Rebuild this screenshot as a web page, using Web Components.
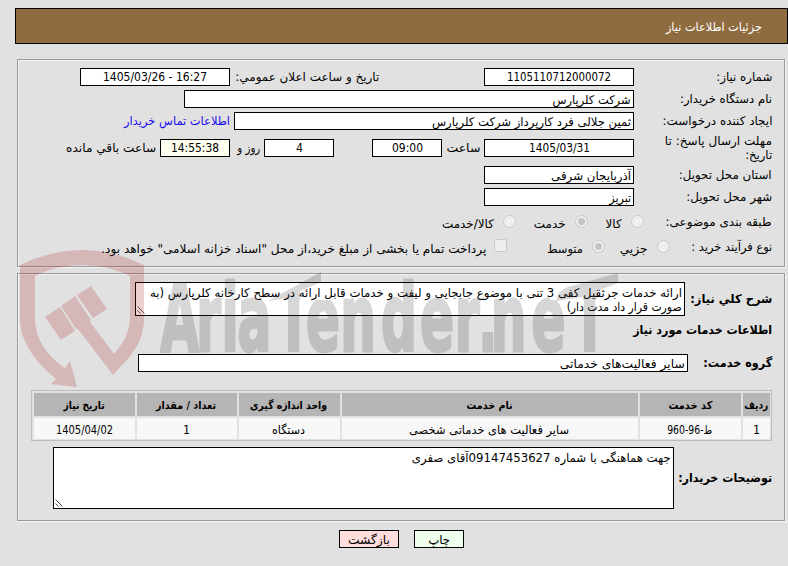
<!DOCTYPE html>
<html lang="fa" dir="rtl">
<head>
<meta charset="utf-8">
<title>جزئیات اطلاعات نیاز</title>
<style>
    html { background: #e1e1e1; }
    body {
        margin: 0;
        height: 566px;
        overflow: hidden;
        background: #e1e1e1;
        color: #000;
        font: 12px/14px "DejaVu Sans Condensed", "DejaVu Sans", sans-serif;
    }
</style>
</head>
<body>
<need-page></need-page>

<script>
const define = (name, html, setup) => {
    const template = document.createElement('template');
    template.innerHTML = html;
    customElements.define(name, class extends HTMLElement {
        constructor() {
            super();
            this.attachShadow({mode: 'open'}).appendChild(template.content.cloneNode(true));
        }
        connectedCallback() {
            if (setup) setup(this, this.shadowRoot);
        }
    });
};

// width, height and leading gap come in as attributes
const applyBox = (el) => {
    if (el.hasAttribute('w')) el.style.width = el.getAttribute('w') + 'px';
    if (el.hasAttribute('h')) el.style.height = el.getAttribute('h') + 'px';
    if (el.hasAttribute('gap')) el.style.marginInlineStart = el.getAttribute('gap') + 'px';
};

// one line of text that is condensed or stretched to a given width
define('fit-text', `
    <style>
    :host { display: inline-block; flex: none; white-space: nowrap; vertical-align: top; }
    :host([bold]) { font-weight: bold; }
    :host([ltr]) { direction: ltr; }
    :host([low]) { padding-top: 3px; }
    :host([link]) { color: #1a0dee; }
    span { display: inline-block; transform-origin: right center; }
    :host([ltr]) span { transform-origin: left center; }
    </style>
    <span><slot></slot></span>
`, (el, root) => {
    applyBox(el);
    const span = root.querySelector('span');
    const natural = span.getBoundingClientRect().width;
    const wanted = Number(el.getAttribute('w'));
    if (natural && wanted) {
        span.style.transform = `scaleX(${wanted / natural})`;
    }
});

define('page-title', `
    <style>
    :host {
        display: flex;
        align-items: center;
        box-sizing: border-box;
        height: 36px;
        margin: 8px 0 15px 15px;
        padding: 1px 25px 0;
        border: 1px solid #000;
        background: #8f6c40;
        color: #fff;
    }
    </style>
    <slot></slot>
`);

define('field-group', `
    <style>
    :host {
        display: flex;
        flex-direction: column;
        box-sizing: border-box;
        margin: 0 3px 6px 17px;
        padding: 8px 12px 0;
        border: 1px solid #9a9a9a;
        box-shadow: inset 1px 1px #f4f4f4, 1px 1px #f4f4f4;
    }
    </style>
    <slot></slot>
`, applyBox);

define('form-row', `
    <style>
    :host { display: flex; flex: none; align-items: center; height: 18px; margin-bottom: 4px; }
    </style>
    <slot></slot>
`, applyBox);

define('row-label', `
    <style>
    :host { display: flex; flex: none; flex-direction: column; align-items: flex-start; }
    </style>
    <slot></slot>
`, applyBox);

define('value-box', `
    <style>
    :host {
        display: flex;
        flex: none;
        align-items: center;
        box-sizing: border-box;
        height: 18px;
        padding: 1px 2px 0;
        border: 1px solid #000;
        background: #fff;
    }
    :host([center]) { justify-content: center; padding-top: 0; }
    :host([live]) { background: #fffff0; }
    </style>
    <slot></slot>
`, applyBox);

define('text-area', `
    <style>
    :host {
        display: flex;
        flex: none;
        flex-direction: column;
        box-sizing: border-box;
        position: relative;
        padding: 3px 2px;
        border: 1px solid #000;
        background: #fff;
    }
    svg { position: absolute; left: 1px; bottom: 1px; }
    </style>
    <slot></slot>
    <svg width="8" height="8" viewBox="0 0 8 8" fill="none" stroke="#555" stroke-width="1">
        <path d="M.5.5l7 7M.5 4.5l3 3"/>
    </svg>
`, applyBox);

define('radio-mark', `
    <style>
    :host {
        display: grid;
        flex: none;
        place-items: center;
        box-sizing: border-box;
        width: 13px;
        height: 13px;
        margin-top: -2px;
        border: 1px solid #c8c8c8;
        border-radius: 50%;
        background: #efefef;
    }
    :host([square]) { border-radius: 2px; margin-top: -3px; }
    i { display: none; width: 7px; height: 7px; border-radius: 50%; background: #c4c4c4; }
    :host([on]) i { display: block; }
    </style>
    <i></i>
`, applyBox);

define('data-grid', `
    <style>
    :host {
        display: grid;
        flex: none;
        grid-template-columns: 27px 101px 296px 101px 100px 101px;
        grid-template-rows: 23px 21px;
        gap: 2px;
        box-sizing: border-box;
        width: 741px;
        height: 51px;
        padding: 2px 1px 1px 1px;
        border: 1px solid #bdbdbd;
        justify-content: center;
    }
    </style>
    <slot></slot>
`);

define('grid-cell', `
    <style>
    :host { display: flex; align-items: center; justify-content: center; background: #f7f7f7; padding-top: 2px; }
    :host([head]) { background: #b5b5b5; font-weight: bold; font-size: 11px; }
    </style>
    <slot></slot>
`);

define('action-button', `
    <style>
    :host {
        display: flex;
        align-items: center;
        justify-content: center;
        box-sizing: border-box;
        height: 18px;
        padding-top: 2px;
        border: 1px solid #000;
        background: #eeffee;
    }
    :host([back]) { background: #ffdddd; }
    </style>
    <slot></slot>
`, applyBox);

// translucent site mark that lies over the form
define('site-mark', `
    <style>
    :host { position: absolute; inset: 0; pointer-events: none; direction: ltr; }
    svg { display: block; opacity: .2; }
    text {
        font: bold 93px "DejaVu Sans Condensed", "DejaVu Sans", sans-serif;
        fill: #3c3c3c;
        stroke: #3c3c3c;
        stroke-width: 3px;
        stroke-linejoin: round;
    }
    </style>
    <svg width="788" height="566" viewBox="0 0 788 566">
        <defs>
            <clipPath id="bars">
                <path d="M150 270H272V360H150zM272 300H590V360H272zM340 270H550V300H340zM580 300H640V360H580z"/>
            </clipPath>
        </defs>
        <g fill="#aa141c">
            <path d="M20 265Q51 250 82 250T144 265V318C144 343 131 356 113 375L78 329 76 329 61 306 75 296 91 320 90 322 114 354C123 343 130 333 130 316V276Q107 265 82 265T35 276V318C35 341 49 357 65 368L70 361 77 387 51 384 56 379C35 361 20 342 20 318Z"/>
            <path d="M45 317L60 307 75 331 61 340ZM77 295L91 286 107 309 93 318Z"/>
        </g>
        <g clip-path="url(#bars)">
            <text transform="translate(0 351) scale(.6 1)"
                x="267 327 369 396 461 510 567 635 700 758 797 818 886 954">AriaTender.neT</text>
        </g>
        <path fill="#3c3c3c" d="M268 301L321 272V282L300 291V300H288V298ZM556 301Q557 291 568 287L618 273V283L597 291V300H583V297Z"/>
    </svg>
`);

define('need-page', `
    <style>
    :host { display: flow-root; position: relative; width: 788px; height: 566px; }
    footer { display: flex; gap: 15px; margin-top: 9px; padding-right: 324px; }
    </style>

    <page-title><fit-text w="96">جزئیات اطلاعات نیاز</fit-text></page-title>

    <field-group h="208">
        <form-row>
            <row-label w="138"><fit-text w="56">شماره نیاز:</fit-text></row-label>
            <value-box w="150" center><fit-text w="104" ltr>1105110712000072</fit-text></value-box>
            <fit-text w="144" gap="105">تاریخ و ساعت اعلان عمومي:</fit-text>
            <value-box w="150" gap="5" center><fit-text w="104" ltr>1405/03/26 - 16:27</fit-text></value-box>
        </form-row>
        <form-row>
            <row-label w="138"><fit-text w="92">نام دستگاه خریدار:</fit-text></row-label>
            <value-box w="450"><fit-text w="78">شرکت کلرپارس</fit-text></value-box>
        </form-row>
        <form-row>
            <row-label w="138"><fit-text w="110">ایجاد کننده درخواست:</fit-text></row-label>
            <value-box w="400"><fit-text w="199">ثمین جلالی فرد کارپرداز شرکت کلرپارس</fit-text></value-box>
            <fit-text w="106" gap="4" link>اطلاعات تماس خریدار</fit-text>
        </form-row>
        <form-row h="28">
            <row-label w="138">
                <fit-text w="107">مهلت ارسال پاسخ: تا</fit-text>
                <fit-text w="27">تاریخ:</fit-text>
            </row-label>
            <value-box w="150" center><fit-text w="61" ltr>1405/03/31</fit-text></value-box>
            <fit-text w="34" gap="4">ساعت</fit-text>
            <value-box w="70" gap="4" center><fit-text w="31" ltr>09:00</fit-text></value-box>
            <value-box w="70" gap="38" center><fit-text w="7" ltr>4</fit-text></value-box>
            <fit-text w="23" gap="4">روز و</fit-text>
            <value-box w="70" gap="7" center live><fit-text w="48" ltr>14:55:38</fit-text></value-box>
            <fit-text w="90" gap="4">ساعت باقي مانده</fit-text>
        </form-row>
        <form-row>
            <row-label w="138"><fit-text w="93">استان محل تحویل:</fit-text></row-label>
            <value-box w="150"><fit-text w="80">آذربایجان شرقی</fit-text></value-box>
        </form-row>
        <form-row>
            <row-label w="138"><fit-text w="86">شهر محل تحویل:</fit-text></row-label>
            <value-box w="150"><fit-text w="22">تبریز</fit-text></value-box>
        </form-row>
        <form-row h="24" style="margin-bottom: 1px">
            <row-label w="128"><fit-text w="106">طبقه بندی موضوعی:</fit-text></row-label>
            <radio-mark></radio-mark><fit-text w="16" gap="9" low>کالا</fit-text>
            <radio-mark gap="18" on></radio-mark><fit-text w="32" gap="9" low>خدمت</fit-text>
            <radio-mark gap="18"></radio-mark><fit-text w="52" gap="9" low>کالا/خدمت</fit-text>
        </form-row>
        <form-row h="24">
            <row-label w="102"><fit-text w="81">نوع فرآیند خرید :</fit-text></row-label>
            <radio-mark></radio-mark><fit-text w="28" gap="9" low>جزیي</fit-text>
            <radio-mark gap="15" on></radio-mark><fit-text w="36" gap="9" low>متوسط</fit-text>
            <radio-mark gap="40" square></radio-mark>
            <fit-text w="385" gap="8" low>پرداخت تمام یا بخشی از مبلغ خرید،از محل "اسناد خزانه اسلامی" خواهد بود.</fit-text>
        </form-row>
    </field-group>

    <field-group h="248" style="margin-bottom: 0">
        <form-row h="34" style="margin-bottom: 5px">
            <row-label w="87"><fit-text w="82" bold>شرح كلي نیاز:</fit-text></row-label>
            <text-area w="550" h="34">
                <fit-text w="532">ارائه خدمات جرثقیل کفی 3 تنی با موضوع جابجایی و لیفت و خدمات قابل ارائه در سطح کارخانه کلرپارس (به</fit-text>
                <fit-text w="115">صورت قرار داد مدت دار)</fit-text>
            </text-area>
        </form-row>
        <form-row style="margin-bottom: 15px"><fit-text w="139" bold>اطلاعات خدمات مورد نیاز</fit-text></form-row>
        <form-row style="margin-bottom: 18px">
            <row-label w="84"><fit-text w="69" bold>گروه خدمت:</fit-text></row-label>
            <value-box w="550"><fit-text w="125">سایر فعالیت‌های خدماتی</fit-text></value-box>
        </form-row>
        <data-grid>
            <grid-cell head><fit-text w="24">ردیف</fit-text></grid-cell>
            <grid-cell head><fit-text w="44">کد خدمت</fit-text></grid-cell>
            <grid-cell head><fit-text w="46">نام خدمت</fit-text></grid-cell>
            <grid-cell head><fit-text w="77">واحد اندازه گیری</fit-text></grid-cell>
            <grid-cell head><fit-text w="60">تعداد / مقدار</fit-text></grid-cell>
            <grid-cell head><fit-text w="41">تاریخ نیاز</fit-text></grid-cell>
            <grid-cell><fit-text w="7">1</fit-text></grid-cell>
            <grid-cell><fit-text w="45">ط-96-960</fit-text></grid-cell>
            <grid-cell><fit-text w="160">سایر فعالیت های خدماتی شخصی</fit-text></grid-cell>
            <grid-cell><fit-text w="33">دستگاه</fit-text></grid-cell>
            <grid-cell><fit-text w="7">1</fit-text></grid-cell>
            <grid-cell><fit-text w="57" ltr>1405/04/02</fit-text></grid-cell>
        </data-grid>
        <form-row h="62" style="margin-top: 6px">
            <row-label w="98"><fit-text w="94" bold>توضیحات خریدار:</fit-text></row-label>
            <text-area w="621" h="62">
                <fit-text w="259">جهت هماهنگی با شماره 09147453627آقای صفری</fit-text>
            </text-area>
        </form-row>
    </field-group>

    <footer>
        <action-button w="50"><fit-text w="22">چاپ</fit-text></action-button>
        <action-button w="60" back><fit-text w="42">بازگشت</fit-text></action-button>
    </footer>

    <site-mark></site-mark>
`);
</script>
</body>
</html>
